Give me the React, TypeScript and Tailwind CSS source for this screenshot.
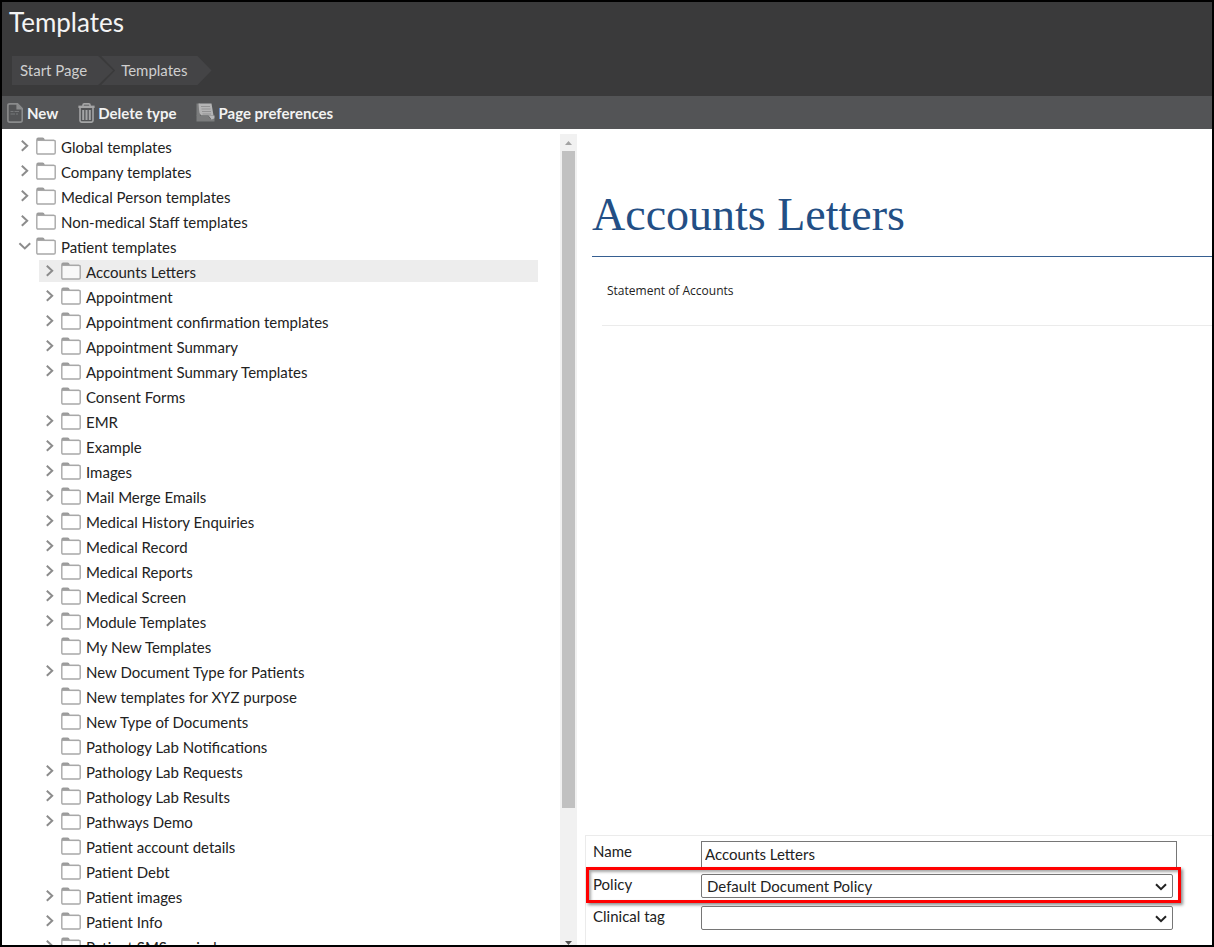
import type { ReactNode } from 'react';
import { clsx } from 'clsx';

interface TreeItem {
  label: string;
  state?: 'open' | 'closed';
  selected?: boolean;
  children?: TreeItem[];
}

const closed = (label: string): TreeItem => ({ label, state: 'closed' });
const leaf = (label: string): TreeItem => ({ label });

const TREE: TreeItem[] = [
  closed('Global templates'),
  closed('Company templates'),
  closed('Medical Person templates'),
  closed('Non-medical Staff templates'),
  {
    label: 'Patient templates',
    state: 'open',
    children: [
      { label: 'Accounts Letters', state: 'closed', selected: true },
      closed('Appointment'),
      closed('Appointment confirmation templates'),
      closed('Appointment Summary'),
      closed('Appointment Summary Templates'),
      leaf('Consent Forms'),
      closed('EMR'),
      closed('Example'),
      closed('Images'),
      closed('Mail Merge Emails'),
      closed('Medical History Enquiries'),
      closed('Medical Record'),
      closed('Medical Reports'),
      closed('Medical Screen'),
      closed('Module Templates'),
      leaf('My New Templates'),
      closed('New Document Type for Patients'),
      leaf('New templates for XYZ purpose'),
      leaf('New Type of Documents'),
      leaf('Pathology Lab Notifications'),
      closed('Pathology Lab Requests'),
      closed('Pathology Lab Results'),
      closed('Pathways Demo'),
      leaf('Patient account details'),
      leaf('Patient Debt'),
      closed('Patient images'),
      closed('Patient Info'),
      closed('Patient SMS reminders'),
    ],
  },
];

function FolderIcon() {
  return (
    <svg width="20" height="18" viewBox="0 0 20 18" fill="none" className="shrink-0" aria-hidden="true">
      <path d="M0.3 4V2.4Q0.3 0.4 2.2 0.4H6.6Q8.2 0.4 8.8 2.7H18Q19.6 2.7 19.6 4.2" fill="#9b9b9b" />
      <path
        d="M0.8 4.6Q0.8 3.4 2 3.4H18Q19.2 3.4 19.2 4.6V15.8Q19.2 17 18 17H2Q0.8 17 0.8 15.8Z"
        fill="#ffffff"
        fillOpacity="0.6"
        stroke="#a8a8a8"
        strokeWidth="1.4"
      />
    </svg>
  );
}

function TreeArrow({ state }: { state: 'open' | 'closed' }) {
  return (
    <svg width="14" height="12" viewBox="0 0 14 12" fill="none" stroke="#8c8c8c" strokeWidth="2" aria-hidden="true">
      {state === 'open' ? <path d="M1.4 3.2L6.8 8.4L12.2 3.2" /> : <path d="M3.8 0.8L9.2 5.8L3.8 10.8" />}
    </svg>
  );
}

function TreeNode({ item }: { item: TreeItem }) {
  return (
    <li>
      <div className={clsx('mb-[3px] flex h-[22px] items-center', item.selected && 'bg-[#ededed]')}>
        <button type="button" aria-label={`Toggle ${item.label}`} className="flex w-[22px] shrink-0 justify-center">
          {item.state && <TreeArrow state={item.state} />}
        </button>
        <FolderIcon />
        <span className="ml-[5px] pt-0.5 whitespace-nowrap">{item.label}</span>
      </div>
      {item.children && (
        <ul className="pl-[25px]">
          {item.children.map((child) => (
            <TreeNode key={child.label} item={child} />
          ))}
        </ul>
      )}
    </li>
  );
}

function Scrollbar() {
  return (
    <div className="flex w-[17px] shrink-0 flex-col items-center bg-[#f1f1f1]" aria-hidden="true">
      <svg width="17" height="17" viewBox="0 0 17 17" className="shrink-0" fill="#a3a3a3">
        <path d="M5 11L8.5 7L12 11Z" />
      </svg>
      <div className="h-[81%] w-[13px] bg-[#c1c1c1]" />
      <svg width="17" height="4" viewBox="0 0 17 4" className="mt-auto shrink-0" fill="#505050">
        <path d="M5 0H12L8.5 4Z" />
      </svg>
    </div>
  );
}

function ToolbarButton({ icon, children }: { icon: ReactNode; children: ReactNode }) {
  return (
    <button type="button" className="flex items-center gap-[3px] font-bold text-[#f2f2f2]">
      {icon}
      {children}
    </button>
  );
}

function NewIcon() {
  return (
    <svg width="17" height="20" viewBox="0 0 17 20" fill="none" stroke="#8a8b8c" strokeWidth="1.6" aria-hidden="true">
      <path d="M2.8 0.9H10.5L15.2 5.5V17.2Q15.2 19.1 13.2 19.1H2.8Q0.9 19.1 0.9 17.2V2.5Q0.9 0.9 2.8 0.9Z" />
      <path d="M10.2 1V5.8H15" fill="#8a8b8c" />
      <path d="M3.5 8.5H6.5M7.5 8.5H12M3.5 11H8M9 11H11" strokeWidth="1" stroke="#77787a" />
    </svg>
  );
}

function TrashIcon() {
  return (
    <svg width="17" height="20" viewBox="0 0 17 20" fill="none" stroke="#a4a4a5" strokeWidth="1.6" aria-hidden="true">
      <path d="M5 3V2Q5 0.9 6.2 0.9H10.8Q12 0.9 12 2V3" />
      <path d="M0.4 3.8H16.6" strokeWidth="2.4" />
      <path d="M2 5V17.6Q2 19.1 3.5 19.1H13.5Q15 19.1 15 17.6V5" />
      <path d="M5.2 7V17M8.5 7V17M11.8 7V17" strokeWidth="2" />
    </svg>
  );
}

function PreferencesIcon() {
  return (
    <svg width="19" height="19" viewBox="0 0 19 19" aria-hidden="true">
      <path d="M0.5 0.5H4V13H0.5Z" fill="#7b7c7d" />
      <path d="M2.5 0.5H15.5L17.5 12.5H5Q3 10 3 6.5Z" fill="#b4b4b5" />
      <path d="M5 3.5H14M5.5 6H14.5M6 8.5H15M6.5 11H15" stroke="#929293" strokeWidth="1" />
      <path d="M0.5 12.5H12L14.5 16H18.5V18.5H0.5Z" fill="#7b7c7d" />
      <path d="M12.5 12.5H18.5V15.5L15.5 16.5Z" fill="#b9b9ba" />
    </svg>
  );
}

function Select({ id, options }: { id: string; options: string[] }) {
  return (
    <div className="relative mr-1">
      <select
        id={id}
        className="block h-6 w-full appearance-none rounded-xs border border-[#767676] bg-white pr-6 pl-[5px] leading-5"
      >
        {options.map((option) => (
          <option key={option}>{option}</option>
        ))}
      </select>
      <svg
        width="12"
        height="8"
        viewBox="0 0 12 8"
        fill="none"
        stroke="#222222"
        strokeWidth="2"
        className="pointer-events-none absolute top-[9px] right-[6px]"
        aria-hidden="true"
      >
        <path d="M1 1.2L6 6.2L11 1.2" />
      </svg>
    </div>
  );
}

export default function App() {
  return (
    <div className="flex h-screen flex-col overflow-hidden border-2 border-black bg-white font-['Lato',sans-serif] text-[15px] leading-5 text-[#222222]">
      <header className="h-[94px] shrink-0 bg-[#3a3a3b]">
        <h1 className="px-[7px] pt-1 text-[26px] leading-8 text-[#f4f4f4]">Templates</h1>
        <nav aria-label="Breadcrumb" className="mt-[18px] ml-[10px] flex text-[#cfcfcf]">
          <a
            href="#start"
            className="bg-[#444446] pr-[26px] pl-2 leading-[29px] [clip-path:polygon(0_0,calc(100%-15px)_0,100%_50%,calc(100%-15px)_100%,0_100%)]"
          >
            Start Page
          </a>
          <a
            href="#templates"
            className="-ml-3 bg-[#444446] pr-6 pl-5 leading-[29px] [clip-path:polygon(0_0,calc(100%-14px)_0,100%_50%,calc(100%-14px)_100%,0_100%,14px_50%)]"
          >
            Templates
          </a>
        </nav>
      </header>

      <div role="toolbar" className="flex h-[33px] shrink-0 items-center gap-5 bg-[#535456] px-[5px]">
        <ToolbarButton icon={<NewIcon />}>New</ToolbarButton>
        <ToolbarButton icon={<TrashIcon />}>Delete type</ToolbarButton>
        <ToolbarButton icon={<PreferencesIcon />}>Page preferences</ToolbarButton>
      </div>

      <div className="flex min-h-0 flex-1">
        <aside className="flex w-[575px] shrink-0 pt-[5px]">
          <ul className="min-w-0 flex-1 overflow-hidden pt-px pr-[22px] pl-3">
            {TREE.map((item) => (
              <TreeNode key={item.label} item={item} />
            ))}
          </ul>
          <Scrollbar />
        </aside>

        <main className="flex min-w-0 flex-1 flex-col pl-2">
          <section className="flex-1 pl-[7px]">
            <h2 className="border-b border-[#365f91] pt-[58px] pb-[13px] font-['Liberation_Serif',serif] text-[46px] leading-14 text-[#234f85]">
              Accounts Letters
            </h2>
            <p className="ml-[10px] border-b border-[#ebebeb] px-[5px] py-6 font-['Open_Sans',sans-serif] text-[12px] leading-5">
              Statement of Accounts
            </p>
          </section>

          <form className="h-[110px] shrink-0 border-t border-l border-[#ebebeb] pt-[5px] pr-[35px] pl-[7px]">
            <div className="grid h-[33px] grid-cols-[108px_1fr] items-start">
              <label htmlFor="name">Name</label>
              <input
                id="name"
                type="text"
                defaultValue="Accounts Letters"
                className="h-7 w-full border border-[#767676] px-[3px] pb-0.5"
              />
            </div>
            <div className="relative grid h-8 grid-cols-[108px_1fr] items-start">
              <label htmlFor="policy">Policy</label>
              <Select id="policy" options={['Default Document Policy']} />
              <div className="pointer-events-none absolute -top-[7px] -right-1 -left-[7px] h-9 border-3 border-[#ff0000] shadow-[2px_2px_3px_rgba(0,0,0,0.45),inset_2px_2px_3px_rgba(0,0,0,0.35)]" />
            </div>
            <div className="grid grid-cols-[108px_1fr] items-start">
              <label htmlFor="tag">Clinical tag</label>
              <Select id="tag" options={['']} />
            </div>
          </form>
        </main>
      </div>
    </div>
  );
}
